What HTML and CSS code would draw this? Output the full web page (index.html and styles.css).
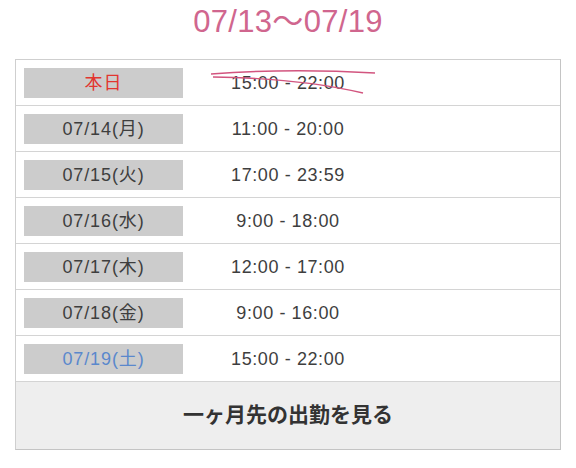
FILE: index.html
```html
<!DOCTYPE html>
<html lang="ja">
<head>
<meta charset="utf-8">
<link rel="stylesheet" href="styles.css">
</head>
<body>
<h1 class="range">07/13〜07/19</h1>
<div class="schedule">
  <div class="row">
    <div class="day"><span class="day-label today">本日</span></div>
    <div class="time struck">15:00 - 22:00
      <svg class="strike" width="170" height="30" viewBox="0 0 170 30">
        <path d="M2 9 Q80 3 166 8" />
        <path d="M4 12 Q90 13 154 28" />
      </svg>
    </div>
  </div>
  <div class="row">
    <div class="day"><span class="day-label">07/14(月)</span></div>
    <div class="time">11:00 - 20:00</div>
  </div>
  <div class="row">
    <div class="day"><span class="day-label">07/15(火)</span></div>
    <div class="time">17:00 - 23:59</div>
  </div>
  <div class="row">
    <div class="day"><span class="day-label">07/16(水)</span></div>
    <div class="time">9:00 - 18:00</div>
  </div>
  <div class="row">
    <div class="day"><span class="day-label">07/17(木)</span></div>
    <div class="time">12:00 - 17:00</div>
  </div>
  <div class="row">
    <div class="day"><span class="day-label">07/18(金)</span></div>
    <div class="time">9:00 - 16:00</div>
  </div>
  <div class="row">
    <div class="day"><span class="day-label sat">07/19(土)</span></div>
    <div class="time">15:00 - 22:00</div>
  </div>
  <a class="more">一ヶ月先の出勤を見る</a>
</div>
</body>
</html>
```
FILE: styles.css
```css
html, body {
  margin: 0;
  padding: 0;
  background: #fff;
}
body {
  font-family: "Liberation Sans", "Noto Sans CJK JP", sans-serif;
  color: #3e3e3e;
}
.range {
  margin: 0;
  height: 59px;
  line-height: 44px;
  text-align: center;
  font-size: 31px;
  font-weight: 400;
  letter-spacing: 0.3px;
  color: #d0668e;
}
.schedule {
  margin: 0 15px;
  border: 1px solid #cfcfcf;
  border-right-color: #c4c4c4;
  border-bottom-color: #c4c4c4;
}
.row {
  display: flex;
  align-items: center;
  height: 45px;
  border-bottom: 1px solid #d4d4d4;
}
.day {
  padding-left: 8px;
}
.day-label {
  display: block;
  width: 159px;
  height: 30px;
  line-height: 30px;
  background: #cccccc;
  text-align: center;
  font-size: 18px;
  letter-spacing: 0.9px;
  color: #3e3e3e;
}
.day-label.today { color: #e2352f; }
.day-label.sat { color: #5a88cc; }
.time {
  position: relative;
  width: 210px;
  padding-top: 2px;
  text-align: center;
  font-size: 18px;
  letter-spacing: 0.6px;
  color: #3e3e3e;
}
.strike {
  position: absolute;
  left: 26px;
  top: -6px;
  fill: none;
  stroke: #d2557f;
  stroke-width: 1.4;
}
.more {
  display: block;
  height: 63px;
  padding-bottom: 4px;
  line-height: 63px;
  background: #eeeeee;
  text-align: center;
  font-family: "Noto Sans CJK JP", sans-serif;
  font-size: 21px;
  font-weight: 700;
  color: #333;
}
```
